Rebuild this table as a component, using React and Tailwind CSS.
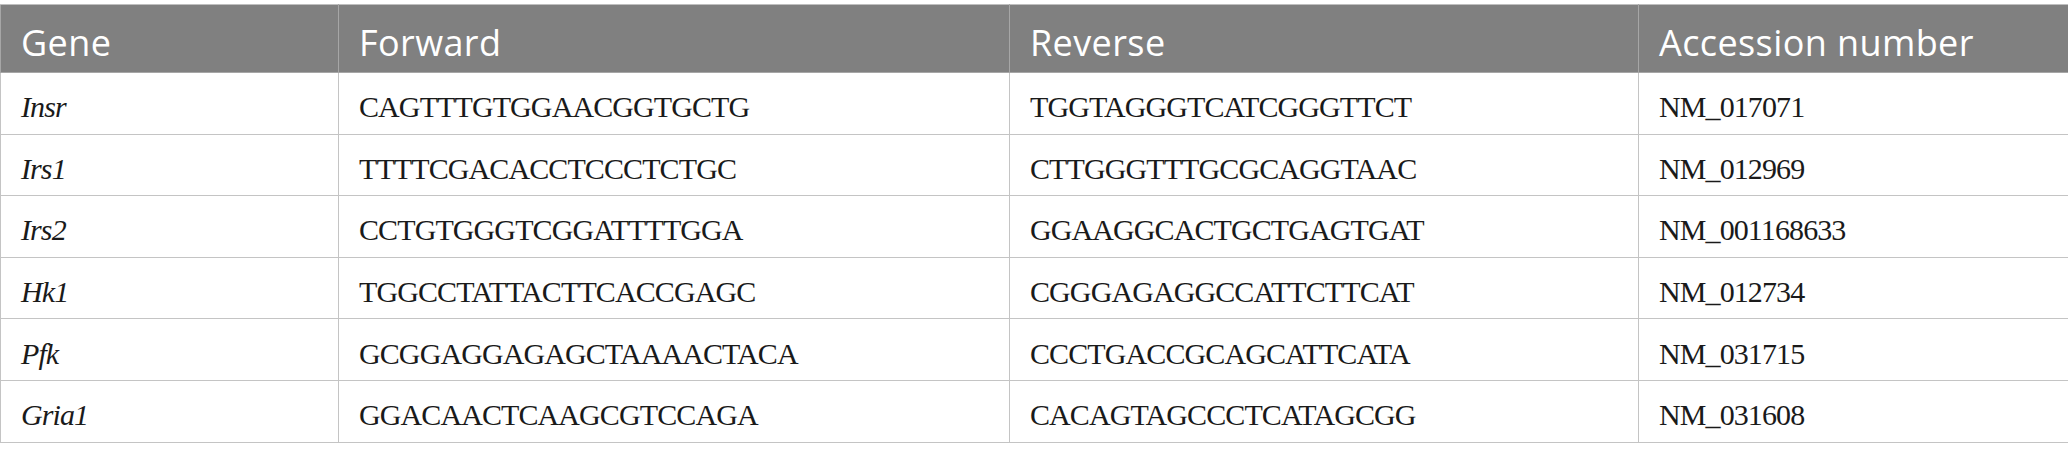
import React from "react";

const rows = [
  ["Insr", "CAGTTTGTGGAACGGTGCTG", "TGGTAGGGTCATCGGGTTCT", "NM_017071"],
  ["Irs1", "TTTTCGACACCTCCCTCTGC", "CTTGGGTTTGCGCAGGTAAC", "NM_012969"],
  ["Irs2", "CCTGTGGGTCGGATTTTGGA", "GGAAGGCACTGCTGAGTGAT", "NM_001168633"],
  ["Hk1", "TGGCCTATTACTTCACCGAGC", "CGGGAGAGGCCATTCTTCAT", "NM_012734"],
  ["Pfk", "GCGGAGGAGAGCTAAAACTACA", "CCCTGACCGCAGCATTCATA", "NM_031715"],
  ["Gria1", "GGACAACTCAAGCGTCCAGA", "CACAGTAGCCCTCATAGCGG", "NM_031608"],
];

const headers = ["Gene", "Forward", "Reverse", "Accession number"];

export default function App() {
  return (
    <div className="w-[2068px] h-[457px] bg-white pt-1">
      <table className="w-[2068px] table-fixed border-collapse">
        <colgroup>
          <col className="w-[338px]" />
          <col className="w-[671px]" />
          <col className="w-[629px]" />
          <col className="w-[430px]" />
        </colgroup>
        <thead>
          <tr className="h-[68px] bg-[#808080]">
            {headers.map((h) => (
              <th
                key={h}
                className="border border-[#a6a6a6] border-t-[#bfbfbf] px-5 pt-2 text-left align-middle font-normal text-white text-[36px] tracking-[0.4px] leading-none"
                style={{ fontFamily: '"Open Sans", sans-serif' }}
              >
                {h}
              </th>
            ))}
          </tr>
        </thead>
        <tbody>
          {rows.map((r) => (
            <tr key={r[0]} className="h-[61.6px]">
              {r.map((c, i) => (
                <td
                  key={i}
                  className={`border border-[#c4c4c4] px-5 pt-2 align-middle text-[#1a1a1a] text-[30px] tracking-[-0.9px] leading-none ${
                    i === 0 ? "italic" : ""
                  }`}
                  style={{ fontFamily: '"Liberation Serif", serif' }}
                >
                  {c}
                </td>
              ))}
            </tr>
          ))}
        </tbody>
      </table>
    </div>
  );
}
